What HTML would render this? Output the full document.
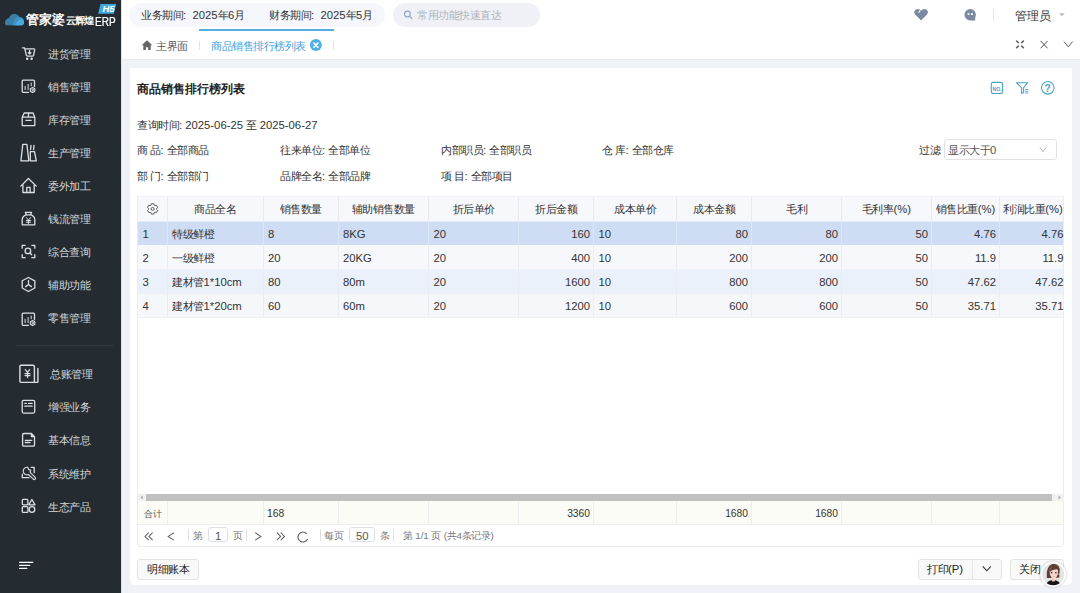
<!DOCTYPE html><html><head><meta charset="utf-8"><style>
*{box-sizing:border-box;margin:0;padding:0}
html,body{width:1080px;height:593px;overflow:hidden;font-family:"Liberation Sans",sans-serif;background:#eff2f7;position:relative}
.t{position:absolute;white-space:nowrap;line-height:1;letter-spacing:-0.5px}
.t span{letter-spacing:0}
.b{position:absolute}
#ov{position:absolute;left:0;top:0;width:1080px;height:593px;overflow:visible}
</style></head><body>
<div class="b" style="left:0px;top:0px;width:121px;height:593px;background:#242c32"></div>
<div class="b" style="left:121px;top:0px;width:1px;height:593px;background:#dfe3e8"></div>
<div class="t" style="left:48px;top:49px;font-size:11px;color:#d3d6d9;">进货管理</div>
<div class="t" style="left:48px;top:82px;font-size:11px;color:#d3d6d9;">销售管理</div>
<div class="t" style="left:48px;top:115px;font-size:11px;color:#d3d6d9;">库存管理</div>
<div class="t" style="left:48px;top:148px;font-size:11px;color:#d3d6d9;">生产管理</div>
<div class="t" style="left:48px;top:181px;font-size:11px;color:#d3d6d9;">委外加工</div>
<div class="t" style="left:48px;top:214px;font-size:11px;color:#d3d6d9;">钱流管理</div>
<div class="t" style="left:48px;top:247px;font-size:11px;color:#d3d6d9;">综合查询</div>
<div class="t" style="left:48px;top:280px;font-size:11px;color:#d3d6d9;">辅助功能</div>
<div class="t" style="left:48px;top:313px;font-size:11px;color:#d3d6d9;">零售管理</div>
<div class="t" style="left:48px;top:402px;font-size:11px;color:#d3d6d9;">增强业务</div>
<div class="t" style="left:48px;top:435px;font-size:11px;color:#d3d6d9;">基本信息</div>
<div class="t" style="left:48px;top:468.5px;font-size:11px;color:#d3d6d9;">系统维护</div>
<div class="t" style="left:48px;top:502px;font-size:11px;color:#d3d6d9;">生态产品</div>
<div class="t" style="left:50px;top:369px;font-size:11px;color:#d3d6d9;">总账管理</div>
<div class="b" style="left:16px;top:345px;width:97px;height:1px;background:#353c44"></div>
<div class="t" style="left:25.5px;top:14px;font-size:12.5px;color:#fff;font-weight:bold;letter-spacing:0.2px">管家婆</div>
<div class="t" style="left:65.5px;top:16px;font-size:10px;color:#fff;font-weight:bold;letter-spacing:-0.6px">云辉煌</div>
<div class="t" style="left:95px;top:15.5px;font-size:10px;color:#fff;letter-spacing:-0.2px;transform:scaleY(1.2);transform-origin:0 0;-webkit-text-stroke:0.2px #fff"><span style="font-size:1em">ERP</span></div>
<div class="b" style="left:122px;top:0px;width:958px;height:59px;background:#fff"></div>
<div class="b" style="left:122px;top:59px;width:958px;height:1px;background:#e9ebef"></div>
<div class="b" style="left:129px;top:3px;width:256px;height:24px;background:#f5f7fc;border-radius:12px"></div>
<div class="t" style="left:141px;top:10px;font-size:11px;color:#333;">业务期间<span style="font-size:1.027em">:&nbsp; 2025</span>年<span style="font-size:1.027em">6</span>月</div>
<div class="t" style="left:269px;top:10px;font-size:11px;color:#333;">财务期间<span style="font-size:1.027em">:&nbsp; 2025</span>年<span style="font-size:1.027em">5</span>月</div>
<div class="b" style="left:393px;top:3px;width:147px;height:24px;background:#eff1f6;border-radius:12px"></div>
<div class="t" style="left:417px;top:10px;font-size:11px;color:#aeb3ba;">常用功能快速直达</div>
<div class="t" style="left:1015px;top:10px;font-size:12px;color:#333;letter-spacing:0">管理员</div>
<div class="b" style="left:993px;top:8px;width:1px;height:13px;background:#e5e7eb"></div>
<div class="b" style="left:199px;top:29px;width:135px;height:2px;background:#54b0e5"></div>
<div class="t" style="left:156px;top:41px;font-size:11px;color:#555;">主界面</div>
<div class="t" style="left:211px;top:41px;font-size:11px;color:#3fa2db;">商品销售排行榜列表</div>
<div class="b" style="left:199px;top:41px;width:1px;height:9px;background:#e2e2e2"></div>
<div class="b" style="left:333px;top:41px;width:1px;height:9px;background:#e2e2e2"></div>
<div class="b" style="left:130px;top:68px;width:942px;height:517px;background:#fff;border-radius:1px 1px 5px 5px"></div>
<div class="t" style="left:137px;top:83px;font-size:12px;color:#222;font-weight:bold;letter-spacing:0">商品销售排行榜列表</div>
<div class="t" style="left:137px;top:120px;font-size:11px;color:#333;">查询时间<span style="font-size:1.027em">: 2025-06-25 </span>至<span style="font-size:1.027em"> 2025-06-27</span></div>
<div class="t" style="left:137px;top:145px;font-size:11px;color:#333;">商 品<span style="font-size:1.027em">: </span>全部商品</div>
<div class="t" style="left:280px;top:145px;font-size:11px;color:#333;">往来单位<span style="font-size:1.027em">: </span>全部单位</div>
<div class="t" style="left:441px;top:145px;font-size:11px;color:#333;">内部职员<span style="font-size:1.027em">: </span>全部职员</div>
<div class="t" style="left:602px;top:145px;font-size:11px;color:#333;">仓 库<span style="font-size:1.027em">: </span>全部仓库</div>
<div class="t" style="left:137px;top:171px;font-size:11px;color:#333;">部 门<span style="font-size:1.027em">: </span>全部部门</div>
<div class="t" style="left:280px;top:171px;font-size:11px;color:#333;">品牌全名<span style="font-size:1.027em">: </span>全部品牌</div>
<div class="t" style="left:441px;top:171px;font-size:11px;color:#333;">项 目<span style="font-size:1.027em">: </span>全部项目</div>
<div class="t" style="left:919px;top:145px;font-size:11px;color:#333;">过滤</div>
<div class="b" style="left:944px;top:139px;width:113px;height:21px;border:1px solid #e2e2e2;border-radius:3px;background:#fff"></div>
<div class="t" style="left:948px;top:145px;font-size:11px;color:#555;">显示大于<span style="font-size:1.027em">0</span></div>
<div class="b" style="left:137px;top:196px;width:927px;height:351px;border:1px solid #ececec;border-top-color:#f2f2f2;border-radius:0 0 4px 4px;background:#fff"></div>
<div class="b" style="left:138px;top:197px;width:925px;height:24px;background:#f6f8fc"></div>
<div class="b" style="left:138px;top:221px;width:925px;height:24px;background:#cedcf4"></div>
<div class="b" style="left:138px;top:245px;width:925px;height:24px;background:#f7f8fc"></div>
<div class="b" style="left:138px;top:269px;width:925px;height:24px;background:#ebf1fa"></div>
<div class="b" style="left:138px;top:293px;width:925px;height:24px;background:#f5f7fb"></div>
<div class="b" style="left:167px;top:197px;width:1px;height:24px;background:#e8eaee"></div>
<div class="b" style="left:167px;top:245px;width:1px;height:72px;background:#e9ecf0"></div>
<div class="b" style="left:167px;top:222px;width:1px;height:23px;background:#dde6f5"></div>
<div class="b" style="left:263px;top:197px;width:1px;height:24px;background:#e8eaee"></div>
<div class="b" style="left:263px;top:245px;width:1px;height:72px;background:#e9ecf0"></div>
<div class="b" style="left:263px;top:222px;width:1px;height:23px;background:#dde6f5"></div>
<div class="b" style="left:338px;top:197px;width:1px;height:24px;background:#e8eaee"></div>
<div class="b" style="left:338px;top:245px;width:1px;height:72px;background:#e9ecf0"></div>
<div class="b" style="left:338px;top:222px;width:1px;height:23px;background:#dde6f5"></div>
<div class="b" style="left:428px;top:197px;width:1px;height:24px;background:#e8eaee"></div>
<div class="b" style="left:428px;top:245px;width:1px;height:72px;background:#e9ecf0"></div>
<div class="b" style="left:428px;top:222px;width:1px;height:23px;background:#dde6f5"></div>
<div class="b" style="left:518px;top:197px;width:1px;height:24px;background:#e8eaee"></div>
<div class="b" style="left:518px;top:245px;width:1px;height:72px;background:#e9ecf0"></div>
<div class="b" style="left:518px;top:222px;width:1px;height:23px;background:#dde6f5"></div>
<div class="b" style="left:593px;top:197px;width:1px;height:24px;background:#e8eaee"></div>
<div class="b" style="left:593px;top:245px;width:1px;height:72px;background:#e9ecf0"></div>
<div class="b" style="left:593px;top:222px;width:1px;height:23px;background:#dde6f5"></div>
<div class="b" style="left:676px;top:197px;width:1px;height:24px;background:#e8eaee"></div>
<div class="b" style="left:676px;top:245px;width:1px;height:72px;background:#e9ecf0"></div>
<div class="b" style="left:676px;top:222px;width:1px;height:23px;background:#dde6f5"></div>
<div class="b" style="left:751px;top:197px;width:1px;height:24px;background:#e8eaee"></div>
<div class="b" style="left:751px;top:245px;width:1px;height:72px;background:#e9ecf0"></div>
<div class="b" style="left:751px;top:222px;width:1px;height:23px;background:#dde6f5"></div>
<div class="b" style="left:841px;top:197px;width:1px;height:24px;background:#e8eaee"></div>
<div class="b" style="left:841px;top:245px;width:1px;height:72px;background:#e9ecf0"></div>
<div class="b" style="left:841px;top:222px;width:1px;height:23px;background:#dde6f5"></div>
<div class="b" style="left:931px;top:197px;width:1px;height:24px;background:#e8eaee"></div>
<div class="b" style="left:931px;top:245px;width:1px;height:72px;background:#e9ecf0"></div>
<div class="b" style="left:931px;top:222px;width:1px;height:23px;background:#dde6f5"></div>
<div class="b" style="left:999px;top:197px;width:1px;height:24px;background:#e8eaee"></div>
<div class="b" style="left:999px;top:245px;width:1px;height:72px;background:#e9ecf0"></div>
<div class="b" style="left:999px;top:222px;width:1px;height:23px;background:#dde6f5"></div>
<div class="b" style="left:138px;top:221px;width:925px;height:1px;background:#e6e9ee"></div>
<div class="b" style="left:138px;top:269px;width:925px;height:1px;background:#eef1f5"></div>
<div class="b" style="left:138px;top:293px;width:925px;height:1px;background:#eef1f5"></div>
<div class="b" style="left:138px;top:317px;width:925px;height:1px;background:#eef1f5"></div>
<div class="t" style="left:167px;width:96px;text-align:center;top:204px;font-size:11px;color:#333;">商品全名</div>
<div class="t" style="left:263px;width:75px;text-align:center;top:204px;font-size:11px;color:#333;">销售数量</div>
<div class="t" style="left:338px;width:90.5px;text-align:center;top:204px;font-size:11px;color:#333;">辅助销售数量</div>
<div class="t" style="left:428.5px;width:90.0px;text-align:center;top:204px;font-size:11px;color:#333;">折后单价</div>
<div class="t" style="left:518.5px;width:75.0px;text-align:center;top:204px;font-size:11px;color:#333;">折后金额</div>
<div class="t" style="left:593.5px;width:83.0px;text-align:center;top:204px;font-size:11px;color:#333;">成本单价</div>
<div class="t" style="left:676.5px;width:75.0px;text-align:center;top:204px;font-size:11px;color:#333;">成本金额</div>
<div class="t" style="left:751.5px;width:90.0px;text-align:center;top:204px;font-size:11px;color:#333;">毛利</div>
<div class="t" style="left:841.5px;width:90.0px;text-align:center;top:204px;font-size:11px;color:#333;">毛利率<span style="font-size:1.027em">(%)</span></div>
<div class="t" style="left:931.5px;width:68.0px;text-align:center;top:204px;font-size:11px;color:#333;">销售比重<span style="font-size:1.027em">(%)</span></div>
<div class="t" style="left:1001.0px;width:64.0px;text-align:center;top:204px;font-size:11px;color:#333;">利润比重<span style="font-size:1.027em">(%)</span></div>
<div class="t" style="left:142.5px;top:229px;font-size:11px;color:#333;"><span style="font-size:1.027em">1</span></div>
<div class="t" style="left:172px;top:229px;font-size:11px;color:#333;">特级鲜橙</div>
<div class="t" style="left:268px;top:229px;font-size:11px;color:#333;"><span style="font-size:1.027em">8</span></div>
<div class="t" style="left:343px;top:229px;font-size:11px;color:#333;"><span style="font-size:1.027em">8KG</span></div>
<div class="t" style="left:433.5px;top:229px;font-size:11px;color:#333;"><span style="font-size:1.027em">20</span></div>
<div class="t" style="right:490.0px;top:229px;font-size:11px;color:#333;"><span style="font-size:1.027em">160</span></div>
<div class="t" style="left:598.5px;top:229px;font-size:11px;color:#333;"><span style="font-size:1.027em">10</span></div>
<div class="t" style="right:332.0px;top:229px;font-size:11px;color:#333;"><span style="font-size:1.027em">80</span></div>
<div class="t" style="right:242.0px;top:229px;font-size:11px;color:#333;"><span style="font-size:1.027em">80</span></div>
<div class="t" style="right:152.0px;top:229px;font-size:11px;color:#333;"><span style="font-size:1.027em">50</span></div>
<div class="t" style="right:84.0px;top:229px;font-size:11px;color:#333;"><span style="font-size:1.027em">4.76</span></div>
<div class="b" style="left:1000px;top:221px;width:63.5px;height:24px;overflow:hidden"><div class="t" style="right:0px;top:8px;font-size:11px;color:#333"><span style="font-size:1.027em">4.76</span></div></div>
<div class="t" style="left:142.5px;top:253px;font-size:11px;color:#333;"><span style="font-size:1.027em">2</span></div>
<div class="t" style="left:172px;top:253px;font-size:11px;color:#333;">一级鲜橙</div>
<div class="t" style="left:268px;top:253px;font-size:11px;color:#333;"><span style="font-size:1.027em">20</span></div>
<div class="t" style="left:343px;top:253px;font-size:11px;color:#333;"><span style="font-size:1.027em">20KG</span></div>
<div class="t" style="left:433.5px;top:253px;font-size:11px;color:#333;"><span style="font-size:1.027em">20</span></div>
<div class="t" style="right:490.0px;top:253px;font-size:11px;color:#333;"><span style="font-size:1.027em">400</span></div>
<div class="t" style="left:598.5px;top:253px;font-size:11px;color:#333;"><span style="font-size:1.027em">10</span></div>
<div class="t" style="right:332.0px;top:253px;font-size:11px;color:#333;"><span style="font-size:1.027em">200</span></div>
<div class="t" style="right:242.0px;top:253px;font-size:11px;color:#333;"><span style="font-size:1.027em">200</span></div>
<div class="t" style="right:152.0px;top:253px;font-size:11px;color:#333;"><span style="font-size:1.027em">50</span></div>
<div class="t" style="right:84.0px;top:253px;font-size:11px;color:#333;"><span style="font-size:1.027em">11.9</span></div>
<div class="b" style="left:1000px;top:245px;width:63.5px;height:24px;overflow:hidden"><div class="t" style="right:0px;top:8px;font-size:11px;color:#333"><span style="font-size:1.027em">11.9</span></div></div>
<div class="t" style="left:142.5px;top:277px;font-size:11px;color:#333;"><span style="font-size:1.027em">3</span></div>
<div class="t" style="left:172px;top:277px;font-size:11px;color:#333;">建材管<span style="font-size:1.027em">1*10cm</span></div>
<div class="t" style="left:268px;top:277px;font-size:11px;color:#333;"><span style="font-size:1.027em">80</span></div>
<div class="t" style="left:343px;top:277px;font-size:11px;color:#333;"><span style="font-size:1.027em">80m</span></div>
<div class="t" style="left:433.5px;top:277px;font-size:11px;color:#333;"><span style="font-size:1.027em">20</span></div>
<div class="t" style="right:490.0px;top:277px;font-size:11px;color:#333;"><span style="font-size:1.027em">1600</span></div>
<div class="t" style="left:598.5px;top:277px;font-size:11px;color:#333;"><span style="font-size:1.027em">10</span></div>
<div class="t" style="right:332.0px;top:277px;font-size:11px;color:#333;"><span style="font-size:1.027em">800</span></div>
<div class="t" style="right:242.0px;top:277px;font-size:11px;color:#333;"><span style="font-size:1.027em">800</span></div>
<div class="t" style="right:152.0px;top:277px;font-size:11px;color:#333;"><span style="font-size:1.027em">50</span></div>
<div class="t" style="right:84.0px;top:277px;font-size:11px;color:#333;"><span style="font-size:1.027em">47.62</span></div>
<div class="b" style="left:1000px;top:269px;width:63.5px;height:24px;overflow:hidden"><div class="t" style="right:0px;top:8px;font-size:11px;color:#333"><span style="font-size:1.027em">47.62</span></div></div>
<div class="t" style="left:142.5px;top:301px;font-size:11px;color:#333;"><span style="font-size:1.027em">4</span></div>
<div class="t" style="left:172px;top:301px;font-size:11px;color:#333;">建材管<span style="font-size:1.027em">1*20cm</span></div>
<div class="t" style="left:268px;top:301px;font-size:11px;color:#333;"><span style="font-size:1.027em">60</span></div>
<div class="t" style="left:343px;top:301px;font-size:11px;color:#333;"><span style="font-size:1.027em">60m</span></div>
<div class="t" style="left:433.5px;top:301px;font-size:11px;color:#333;"><span style="font-size:1.027em">20</span></div>
<div class="t" style="right:490.0px;top:301px;font-size:11px;color:#333;"><span style="font-size:1.027em">1200</span></div>
<div class="t" style="left:598.5px;top:301px;font-size:11px;color:#333;"><span style="font-size:1.027em">10</span></div>
<div class="t" style="right:332.0px;top:301px;font-size:11px;color:#333;"><span style="font-size:1.027em">600</span></div>
<div class="t" style="right:242.0px;top:301px;font-size:11px;color:#333;"><span style="font-size:1.027em">600</span></div>
<div class="t" style="right:152.0px;top:301px;font-size:11px;color:#333;"><span style="font-size:1.027em">50</span></div>
<div class="t" style="right:84.0px;top:301px;font-size:11px;color:#333;"><span style="font-size:1.027em">35.71</span></div>
<div class="b" style="left:1000px;top:293px;width:63.5px;height:24px;overflow:hidden"><div class="t" style="right:0px;top:8px;font-size:11px;color:#333"><span style="font-size:1.027em">35.71</span></div></div>
<div class="b" style="left:138px;top:494px;width:926px;height:7px;background:#f1f1f1"></div>
<div class="b" style="left:146px;top:494px;width:906px;height:7px;background:#c1c1c1"></div>
<div class="b" style="left:138px;top:501px;width:925px;height:24px;background:#fbfcf6;border-bottom:1px solid #eceef0"></div>
<div class="b" style="left:167px;top:501px;width:1px;height:23px;background:#eceef0"></div>
<div class="b" style="left:263px;top:501px;width:1px;height:23px;background:#eceef0"></div>
<div class="b" style="left:338px;top:501px;width:1px;height:23px;background:#eceef0"></div>
<div class="b" style="left:428px;top:501px;width:1px;height:23px;background:#eceef0"></div>
<div class="b" style="left:518px;top:501px;width:1px;height:23px;background:#eceef0"></div>
<div class="b" style="left:593px;top:501px;width:1px;height:23px;background:#eceef0"></div>
<div class="b" style="left:676px;top:501px;width:1px;height:23px;background:#eceef0"></div>
<div class="b" style="left:751px;top:501px;width:1px;height:23px;background:#eceef0"></div>
<div class="b" style="left:841px;top:501px;width:1px;height:23px;background:#eceef0"></div>
<div class="b" style="left:931px;top:501px;width:1px;height:23px;background:#eceef0"></div>
<div class="b" style="left:999px;top:501px;width:1px;height:23px;background:#eceef0"></div>
<div class="t" style="left:144px;top:509.5px;font-size:9px;color:#555;letter-spacing:-0.2px">合计</div>
<div class="t" style="left:267px;top:509px;font-size:10px;color:#333;"><span style="font-size:1.027em">168</span></div>
<div class="t" style="right:490px;top:509px;font-size:10px;color:#333;"><span style="font-size:1.027em">3360</span></div>
<div class="t" style="right:332px;top:509px;font-size:10px;color:#333;"><span style="font-size:1.027em">1680</span></div>
<div class="t" style="right:242px;top:509px;font-size:10px;color:#333;"><span style="font-size:1.027em">1680</span></div>
<div class="b" style="left:188px;top:529px;width:1px;height:12px;background:#e0e0e0"></div>
<div class="b" style="left:246px;top:529px;width:1px;height:12px;background:#e0e0e0"></div>
<div class="b" style="left:320px;top:529px;width:1px;height:12px;background:#e0e0e0"></div>
<div class="b" style="left:393px;top:529px;width:1px;height:12px;background:#e0e0e0"></div>
<div class="t" style="left:193px;top:531px;font-size:9.5px;color:#777;">第</div>
<div class="b" style="left:208px;top:527px;width:20px;height:15px;border:1px solid #dcdfe6;border-radius:3px;background:#fff"></div>
<div class="t" style="left:215px;top:531px;font-size:11px;color:#555;"><span style="font-size:1.027em">1</span></div>
<div class="t" style="left:233px;top:531px;font-size:9.5px;color:#777;">页</div>
<div class="t" style="left:324px;top:531px;font-size:9.5px;color:#777;">每页</div>
<div class="b" style="left:349px;top:527px;width:26px;height:15px;border:1px solid #dcdfe6;border-radius:3px;background:#fff"></div>
<div class="t" style="left:356px;top:531px;font-size:11px;color:#555;"><span style="font-size:1.027em">50</span></div>
<div class="t" style="left:380px;top:531px;font-size:9.5px;color:#777;">条</div>
<div class="t" style="left:403px;top:531px;font-size:9.5px;color:#777;">第<span style="font-size:1.027em"> 1/1 </span>页<span style="font-size:1.027em"> (</span>共<span style="font-size:1.027em">4</span>条记录<span style="font-size:1.027em">)</span></div>
<div class="b" style="left:137px;top:559px;width:62px;height:21px;border:1px solid #e3e3e3;border-radius:3px;background:#f9f9f9"></div>
<div class="t" style="left:147px;top:564px;font-size:11px;color:#222;">明细账本</div>
<div class="b" style="left:918px;top:559px;width:84px;height:21px;border:1px solid #e3e3e3;border-radius:3px;background:#f9f9f9"></div>
<div class="b" style="left:972px;top:559px;width:1px;height:21px;background:#e3e3e3"></div>
<div class="t" style="left:927px;top:564px;font-size:11px;color:#222;">打印<span style="font-size:1.027em">(P)</span></div>
<div class="b" style="left:1010px;top:559px;width:54px;height:21px;border:1px solid #e3e3e3;border-radius:3px;background:#f9f9f9"></div>
<div class="t" style="left:1019px;top:564px;font-size:11px;color:#222;">关闭</div>
<svg id="ov" viewBox="0 0 1080 593">
<g fill="none" stroke="#dcdfe2" stroke-width="1.3" stroke-linecap="round" stroke-linejoin="round">
<!-- cart -->
<path d="M22.5 47.8H24.6L26.3 55.2Q26.5 56.1 27.4 56.1H32.6Q33.4 56.1 33.6 55.3L34.7 49.7Q34.8 48.9 34 48.9H25.9"/>
<circle cx="27.2" cy="58.8" r="0.6" fill="#dcdfe2"/><circle cx="31.6" cy="58.8" r="0.6" fill="#dcdfe2"/>
<path d="M29.6 50.3V53.6M28.3 52.6L29.6 54L30.9 52.6"/>
<!-- sales -->
<path id="sal" d="M28.5 92.3H23.2Q22.2 92.3 22.2 91.3V81.2Q22.2 80.2 23.2 80.2H33.5Q34.5 80.2 34.5 81.2V86.5"/>
<path d="M25.1 86.4V89.6M28.1 84.4V89.6M31.2 83V85.8" stroke-width="1"/>
<path d="M32.60 87.40 L34.85 88.70 L34.85 91.30 L32.60 92.60 L30.35 91.30 L30.35 88.70Z" stroke-width="1.1"/><circle cx="32.6" cy="90" r="0.8" stroke-width="0.9"/>
<!-- box -->
<path d="M22.2 117.2V125.6H34.8V117.2L33 113H24.2Z M22.2 117.2H34.8 M28.5 113V117.2 M25.9 120.3H31.2"/>
<!-- production -->
<path d="M22.8 144.4H26.9L28.8 160.8H20.9Z M30.3 151.7H34.5L36.3 160.8H30.3Z M31 145.5L30.6 149.5 M34 145.5L33.6 149.5"/>
<!-- house -->
<path d="M20.8 186.1L28.4 178.5L36.3 186.1 M22.9 185V192.5H34.2V185 M26.8 192.5V187.4H30.1V192.5"/>
<!-- money bag -->
<path d="M25.3 212.3H31.6L30.4 214.9H26.5Z M26 214.9Q22.2 216.5 22.2 220V224.8H34.8V220Q34.8 216.5 31 214.9"/>
<path d="M26.4 217.6L28.5 220.2L30.6 217.6 M28.5 220.2V223.5 M26.3 220.6H30.7 M26.3 222.2H30.7" stroke-width="1"/>
<!-- search -->
<path d="M22.2 248.2V245.3H25.2 M31.8 245.3H34.8V248.2 M34.8 254.7V257.7H31.8 M25.2 257.7H22.2V254.7"/>
<circle cx="27.9" cy="250.9" r="2.8"/><path d="M30 253L31.7 254.8"/>
<!-- hex -->
<path d="M28.4 277.5L34.8 280.8V288L28.4 291.5L22.2 288V280.8Z"/>
<path d="M28.5 280.5V284.5L25.6 286.6 M28.5 284.5L31.4 286.6"/>
<!-- retail -->
<path d="M28.5 325.3H23.2Q22.2 325.3 22.2 324.3V314.2Q22.2 313.2 23.2 313.2H33.5Q34.5 313.2 34.5 314.2V319.5"/>
<path d="M25.1 319.4V322.6M28.1 317.4V322.6M31.2 316V318.8" stroke-width="1"/>
<path d="M32.60 320.40 L34.85 321.70 L34.85 324.30 L32.60 325.60 L30.35 324.30 L30.35 321.70Z" stroke-width="1.1"/><circle cx="32.6" cy="323" r="0.8" stroke-width="0.9"/>
<!-- ledger -->
<path d="M21 365.2H33Q34.4 365.2 34.4 366.6V382.4H21Q19.9 382.4 19.9 381.3V366.3Q19.9 365.2 21 365.2Z" stroke-width="1.4"/>
<path d="M34.4 382.4H37.2Q37.9 382.4 37.9 381.7V368.5" stroke-width="1.4"/>
<path d="M25.3 369.6L27.5 372.4L29.7 369.6 M27.5 372.4V377.6 M25 373.6H30 M25 375.6H30" stroke-width="1.2"/>
<!-- enhance -->
<rect x="22.2" y="400.3" width="12.5" height="12.8" rx="1.5"/>
<path d="M24.8 403.3H26.3 M28.4 403.3H32.2 M24.8 406.2H32.2"/>
<!-- info -->
<path d="M31.4 433.5H23.8Q22.6 433.5 22.6 434.7V445Q22.6 446.2 23.8 446.2H33.3Q34.5 446.2 34.5 445V436.6Z M31.4 433.5V436.6H34.5 M25.3 440.3H31.8 M25.3 442.5H29.9"/>
<!-- maintenance -->
<path d="M22.3 474.2V477.7H29 M31.3 467.4H34.2V472.7"/>
<path d="M27.98 467.33A3.8 3.8 0 1 0 28.42 474.52L33.29 479.13A1.3 1.3 0 0 0 35.13 477.29L30.18 472.34L30.67 470.02L28.5 469.6Z" stroke-width="1.1"/>
<!-- eco -->
<rect x="22.3" y="499.4" width="5.6" height="5.4" rx="1"/>
<path d="M31.9 499.5L35 504.8H28.8Z"/>
<rect x="22.3" y="506.6" width="5.6" height="5.8" rx="1"/>
<circle cx="32" cy="509.5" r="2.8"/>
</g>
<!-- hamburger -->
<path d="M19.6 562.3H32.8 M19.6 565.3H29.8 M19.6 568.3H26.8" stroke="#fff" stroke-width="1.3" stroke-linecap="round"/>
<!-- logo cloud -->
<path d="M6.5 25.3Q4.6 25.3 5.1 21.8Q5.9 18.6 9 18Q10.6 14 14.2 13.9Q18 13.9 19.5 17Q23.5 17 23.9 21.5Q24 25.3 21.5 25.3Z" fill="#3b7fa7"/>
<path d="M11.8 25.3L16 17.5Q18.7 16 20.2 17.4Q23.6 17.7 23.9 21.5Q24 25.3 21.5 25.3Z" fill="#3a95c8"/>
<path d="M15 25.3L18.4 20.3Q21.5 19 23.5 20.2Q24.2 22.3 23.9 23.5Q23.3 25.3 21.5 25.3Z" fill="#4aaee2"/>
<!-- H5 badge -->
<path d="M100.5 4H116.2L113.8 13.8H98.2Z" fill="#3fa9e0"/>
<text x="102.5" y="12.3" font-family="Liberation Sans" font-size="9.5" font-weight="bold" font-style="italic" fill="#fff">H5</text>
<!-- search icon -->
<circle cx="407.4" cy="14" r="2.9" fill="none" stroke="#93a3c1" stroke-width="1.1"/>
<path d="M409.5 16.2L411.9 18.6" stroke="#93a3c1" stroke-width="1.2" stroke-linecap="round"/>
<!-- heart -->
<path d="M921.1 20.5L915.2 14.6Q913.6 12.7 914.5 10.9Q915.6 8.9 917.9 8.9Q919.8 8.9 921.1 10.6Q922.4 8.9 924.3 8.9Q926.6 8.9 927.7 10.9Q928.6 12.7 927 14.6Z" fill="#7b8aa1"/>
<path d="M918.6 12.6L920.3 10.4" stroke="#fff" stroke-width="1.1"/>
<!-- chat -->
<path d="M970.25 9.05A5.75 5.75 0 1 0 970.25 20.55H975.2V17.4A5.75 5.75 0 0 0 970.25 9.05Z" fill="#7b8aa1"/>
<rect x="967.6" y="13.2" width="1.8" height="1.8" fill="#fff"/><rect x="971.1" y="13.2" width="1.8" height="1.8" fill="#fff"/>
<!-- caret -->
<path d="M1059.2 13.3H1064.8L1062 16.3Z" fill="#b5bac2"/>
<!-- home -->
<path d="M147 40.3L141.7 45.3H143.3V50H145.9V47.2H148.1V50H150.7V45.3H152.3Z" fill="#666"/>
<!-- tab close -->
<circle cx="315.9" cy="45.1" r="6" fill="#4fb0e6"/>
<path d="M313.9 43.1L317.9 47.1M317.9 43.1L313.9 47.1" stroke="#fff" stroke-width="1.6" stroke-linecap="round"/>
<!-- window controls -->
<g fill="none" stroke="#555" stroke-width="1">
<path d="M1016.2 40.6L1018.8 43.1 M1023.8 40.6L1021.2 43.1 M1016.2 48.1L1018.8 45.6 M1023.8 48.1L1021.2 45.6" stroke-width="1.5" stroke="#666"/>
<path d="M1040.6 40.9L1047.6 48.3 M1047.6 40.9L1040.6 48.3"/>
<path d="M1063.9 41.6L1068.3 46.8L1072.7 41.6"/>
</g>
<!-- title icons -->
<g fill="none" stroke="#4aa3c8" stroke-width="1.1">
<rect x="991.3" y="82.4" width="11.3" height="11.1" rx="2"/>
<path d="M1016.3 82.7H1027.8L1023.6 87.6V92.6L1021.6 93.4V87.6Z" stroke-linejoin="round"/>
<circle cx="1047.8" cy="87.8" r="6.3"/>
</g>
<text x="992.6" y="90.6" font-family="Liberation Sans" font-size="5.2" font-weight="bold" fill="#4aa3c8">NO.</text>
<path d="M1025.2 89.6H1028.3 M1025.2 91.3H1028.3 M1025.2 93H1028.3" stroke="#4aa3c8" stroke-width="0.9"/>
<text x="1044.6" y="91.9" font-family="Liberation Sans" font-size="10" font-weight="bold" fill="#4aa3c8">?</text>
<!-- select caret -->
<path d="M1039.9 147.2L1043.1 151.6L1046.3 147.2" fill="none" stroke="#b0b0b0" stroke-width="0.9"/>
<!-- gear -->
<g fill="none" stroke="#5a5a5a" stroke-width="1">
<path d="M151.32 203.76 L153.88 203.76 L154.14 205.10 L155.12 205.67 L156.41 205.22 L157.69 207.44 L156.66 208.33 L156.66 209.47 L157.69 210.36 L156.41 212.58 L155.12 212.13 L154.14 212.70 L153.88 214.04 L151.32 214.04 L151.06 212.70 L150.08 212.13 L148.79 212.58 L147.51 210.36 L148.54 209.47 L148.54 208.33 L147.51 207.44 L148.79 205.22 L150.08 205.67 L151.06 205.10Z" stroke-linejoin="round"/>
<circle cx="152.6" cy="208.9" r="1.5"/>
</g>
<!-- scroll arrows -->
<path d="M142.6 495.6V499.4L140.6 497.5Z" fill="#a0a0a0"/>
<path d="M1058.6 495.6V499.4L1060.6 497.5Z" fill="#a0a0a0"/>
<!-- pagination icons -->
<g fill="none" stroke="#666" stroke-width="1.1">
<path d="M148.7 532.7L145 536.4L148.7 540.1 M152.6 532.7L148.9 536.4L152.6 540.1"/>
<path d="M173.8 532.7L168.2 536.4L173.8 540.1"/>
<path d="M255.2 532.7L260.9 536.4L255.2 540.1"/>
<path d="M276.9 532.7L280.6 536.4L276.9 540.1 M280.8 532.7L284.5 536.4L280.8 540.1"/>
<path d="M306.8 533.8A5 5 0 1 0 307.6 539" />
</g>
<!-- dropdown caret on print -->
<path d="M982.8 566.4L986.8 570.8L990.8 566.4" fill="none" stroke="#333" stroke-width="1.1"/>
<!-- avatar -->
<circle cx="1053.2" cy="574.2" r="12.8" fill="#fff" style="filter:drop-shadow(0 0 1.2px rgba(0,0,0,0.28))"/>
<clipPath id="avc"><circle cx="1053.2" cy="574.2" r="11"/></clipPath>
<circle cx="1053.2" cy="574.2" r="11" fill="#e4e4e4"/>
<g clip-path="url(#avc)">
<path d="M1046.8 578Q1045.6 565.5 1053.3 563.8Q1060.6 564.2 1059.6 572L1059.3 577.6L1056.8 577.8L1050 577.9Z" fill="#5b3f36"/>
<path d="M1045.5 586Q1046.5 580.6 1053.3 580Q1060 580.6 1061 586Z" fill="#161616"/>
<path d="M1051.9 577.5H1054.9V581.2Q1053.4 582 1051.9 581.2Z" fill="#efcabe"/>
<path d="M1049.6 571Q1049.6 567.5 1053.8 567.3Q1058 567.5 1058 571.5Q1058 577.5 1053.8 579.2Q1049.6 577.5 1049.6 571Z" fill="#f5d6cc"/>
<path d="M1049.4 572Q1050 566.6 1054.5 566.2Q1057.4 566.6 1058.3 569.6Q1054.5 568.2 1049.4 572Z" fill="#5b3f36"/>
<circle cx="1059.3" cy="574.2" r="0.9" fill="#efc0b4"/>
<ellipse cx="1051.6" cy="572.8" rx="0.9" ry="0.8" fill="#2a2a2a"/><ellipse cx="1055.9" cy="572.8" rx="0.9" ry="0.8" fill="#2a2a2a"/>
<ellipse cx="1053.9" cy="576.3" rx="0.8" ry="0.4" fill="#e69a95"/>
</g>
</svg>
</body></html>
